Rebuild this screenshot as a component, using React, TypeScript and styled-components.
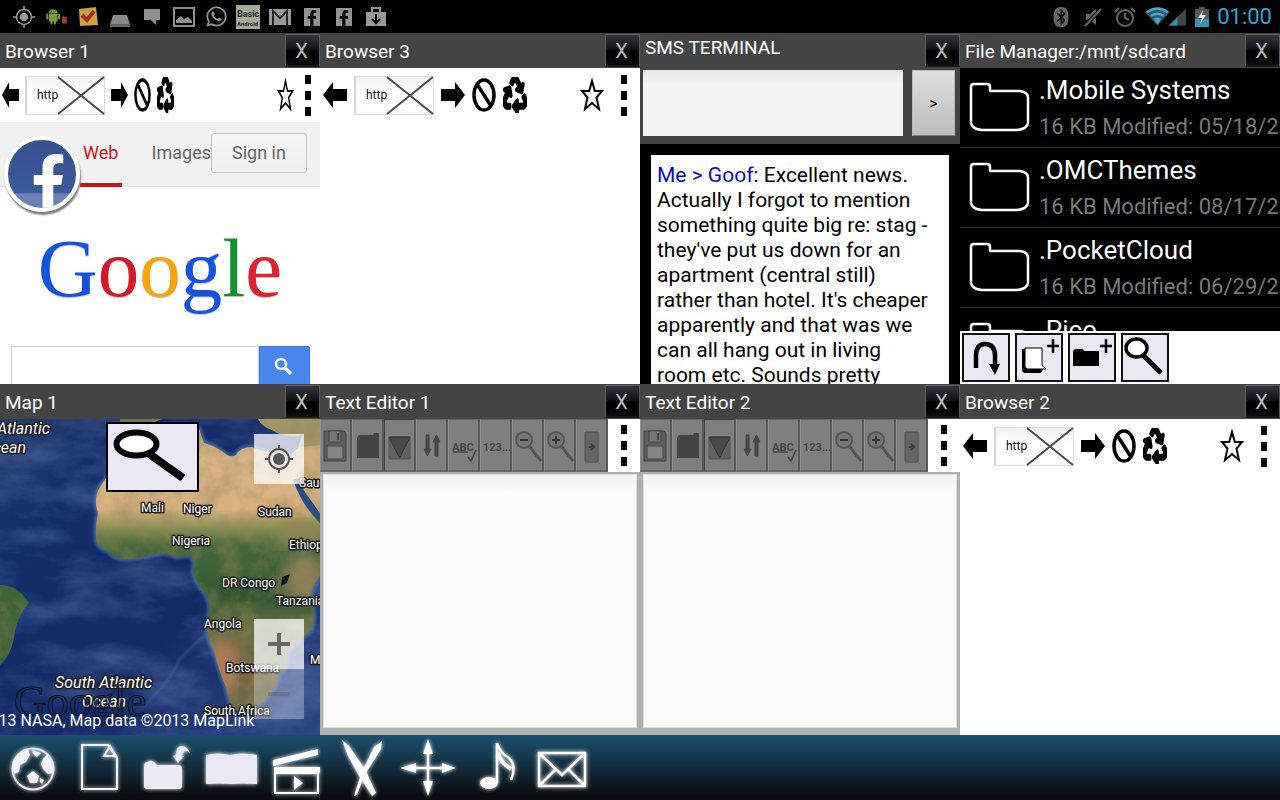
import React from "react";
import styled, { createGlobalStyle, css } from "styled-components";
import { FaRecycle, FaWhatsapp, FaFacebookF, FaBluetooth } from "react-icons/fa";
import { AiFillAndroid } from "react-icons/ai";

const GlobalStyle = createGlobalStyle`
  *, *::before, *::after { box-sizing: border-box; }
  body { margin: 0; background: #000; font-family: Roboto, "Liberation Sans", sans-serif; }
  button, input, textarea { font-family: inherit; margin: 0; }
  h2, p, ul { margin: 0; padding: 0; }
`;

const Desktop = styled.div`
  display: grid;
  grid-template-rows: 33px minmax(0, 1fr) 65px;
  height: 100vh;
  overflow: hidden;
`;

const StatusBar = styled.header`
  display: flex;
  align-items: center;
  padding: 0 8px 0 12px;
  background: #000;
  color: #8c8c8c;
`;

const Notices = styled.div`
  display: flex;
  gap: 8px;
  flex: 1;
`;

const StatusIcon = styled.span<{ $w?: number }>`
  display: flex;
  align-items: center;
  justify-content: center;
  width: ${(p) => p.$w ?? 24}px;
  height: 24px;
`;

const FbNotice = styled(StatusIcon)`
  width: 16px;
  height: 18px;
  margin: 3px 4px;
  background: #929292;
  color: #000;
  align-items: flex-end;
  justify-content: flex-end;
`;

const Indicators = styled.div`
  display: flex;
  align-items: center;
  gap: 8px;
`;

const Clock = styled.time`
  font-size: 22px;
  line-height: 34px;
  color: #33a5d5;
`;

const Windows = styled.main`
  display: grid;
  grid-template-columns: repeat(4, minmax(0, 1fr));
  grid-template-rows: repeat(2, minmax(0, 1fr));
`;

const Window = styled.section`
  display: flex;
  flex-direction: column;
  overflow: hidden;
  background: #fff;
`;

const TitleBar = styled.div`
  display: flex;
  flex: none;
  height: 35px;
  padding-left: 5px;
  background: #444;
  color: #fff;
`;

const Title = styled.h2<{ $raised?: boolean }>`
  flex: 1;
  font-size: 19px;
  font-weight: 400;
  line-height: ${(p) => (p.$raised ? 30 : 38)}px;
  white-space: nowrap;
  overflow: hidden;
`;

const CloseButton = styled.button`
  width: 35px;
  height: 33px;
  margin-top: 1px;
  padding: 0 2px 0 0;
  border: 1px solid #5d5f66;
  border-width: 1px 1px 2px;
  border-bottom-color: #18181a;
  background: linear-gradient(#33353c, #121318 45%, #000 55%, #0b0b0d);
  color: #bdbdbd;
  font-size: 20px;
  line-height: 32px;
`;

const BrowserBar = styled.div<{ $compact?: boolean }>`
  display: flex;
  flex: none;
  align-items: center;
  height: 54px;
  gap: ${(p) => (p.$compact ? 6 : 7)}px;
  padding: ${(p) => (p.$compact ? "0 9px 0 2px" : "0 13px 0 3px")};
`;

const IconButton = styled.button<{ $w: number; $end?: boolean }>`
  display: flex;
  flex: none;
  width: ${(p) => p.$w}px;
  height: 36px;
  padding: 0;
  border: 0;
  background: none;
  color: #000;
  ${(p) => p.$end && css`margin: 0 ${p.$w > 20 ? 10 : 5}px 0 auto;`}
  svg { width: 100%; height: 100%; display: block; }
`;

const UrlField = styled.div`
  position: relative;
  flex: none;
  width: 80px;
  height: 39px;
`;

const UrlInput = styled.input`
  width: 100%;
  height: 100%;
  padding: 0 0 0 10px;
  border: 1px solid #dcdcdc;
  border-left: 2px solid #d4d4d4;
  background: linear-gradient(#f1f1f1, #fff 40%);
  font-size: 12px;
  color: #111;
`;

const ClearButton = styled.button`
  position: absolute;
  top: 0;
  right: 0;
  width: 48px;
  height: 39px;
  padding: 0;
  border: 0;
  background: none;
  svg { display: block; width: 100%; height: 100%; }
`;

const MoreButton = styled.button`
  display: flex;
  flex: none;
  flex-direction: column;
  justify-content: space-between;
  width: 6px;
  height: 41px;
  padding: 0;
  border: 0;
  background: none;
`;

const Square = styled.span`
  height: 9px;
  width: 6px;
  background: #000;
`;

const SearchPage = styled.div`
  position: relative;
  flex: 1;
  overflow: hidden;
`;

const PageNav = styled.nav`
  display: flex;
  height: 65px;
  padding: 0 13px 0 80px;
  background: #f1f1f1;
  border-bottom: 1px solid #e0e0e0;
`;

const NavLink = styled.a<{ $active?: boolean }>`
  height: 65px;
  width: ${(p) => (p.$active ? 42 : 60)}px;
  margin-right: ${(p) => (p.$active ? 30 : 0)}px;
  padding-left: ${(p) => (p.$active ? 3 : 0)}px;
  border-bottom: ${(p) => (p.$active ? "4px solid #c5161d" : "0")};
  color: ${(p) => (p.$active ? "#c5161d" : "#666")};
  font-size: 18px;
  line-height: 62px;
  text-decoration: none;
  overflow: hidden;
`;

const SignIn = styled.button`
  width: 96px;
  height: 40px;
  margin: 11px 0 0 auto;
  padding: 0;
  flex: none;
  border: 1px solid #c2c2c2;
  border-radius: 3px;
  background: linear-gradient(#f6f6f6, #f0f0f0);
  color: #666;
  font-size: 18px;
  line-height: 36px;
`;

const ChatHead = styled.button`
  position: absolute;
  left: 4px;
  top: 14px;
  display: flex;
  align-items: flex-end;
  justify-content: flex-end;
  width: 76px;
  height: 76px;
  padding: 0;
  border: 4px solid #fff;
  border-radius: 50%;
  overflow: hidden;
  background: linear-gradient(#34528f, #3b5a98 78%, #6a82b5 79%);
  box-shadow: 1px 3px 2px #777;
  color: #fff;
  svg { flex: none; margin-bottom: -1px; }
`;

const LogoText = styled.p`
  display: flex;
  justify-content: center;
  height: 116px;
  margin-top: 43px;
  font-family: "Liberation Serif", serif;
  font-size: 83px;
  line-height: 76px;
`;

const Letter = styled.span<{ $c: string }>`
  color: ${(p) => p.$c};
  text-shadow: 0 1px 1px #0004;
`;

const SearchForm = styled.form`
  display: flex;
  height: 52px;
  padding: 0 10px 0 11px;
`;

const SearchInput = styled.input`
  flex: 1;
  min-width: 0;
  border: 1px solid #ccc;
  background: #fff;
  padding: 0 8px;
`;

const SearchButton = styled.button`
  width: 51px;
  padding: 0 3px 9px 0;
  border: 1px solid #3b7ae8;
  border-radius: 0 2px 2px 0;
  background: #4787ed;
  color: #fff;
`;

const SmsForm = styled.form`
  display: flex;
  flex: none;
  gap: 9px;
  height: 76px;
  padding: 2px 5px 8px 3px;
  background: #444;
`;

const SmsInput = styled.textarea`
  flex: 1;
  min-width: 0;
  border: 0;
  padding: 4px;
  background: linear-gradient(#e8e8e8, #f3f3f3 20%);
  resize: none;
`;

const SendButton = styled.button`
  width: 43px;
  padding: 0;
  border: 1px solid #bbb;
  border-bottom-color: #777;
  background: linear-gradient(#dedede, #bdbdbd);
  color: #000;
  font-size: 16px;
`;

const SmsLog = styled.div`
  flex: 1;
  min-height: 0;
  overflow: hidden;
  padding: 11px 11px 0;
  background: #000;
`;

const Message = styled.p`
  padding: 8px 0 10px 6px;
  background: #fff;
  color: #000;
  font-size: 21px;
  line-height: 25px;
  white-space: pre-line;
`;

const Sender = styled.span`
  color: #0a0aae;
`;

const FileList = styled.ul`
  flex: 1;
  min-height: 0;
  overflow: hidden;
  list-style: none;
  background: #000;
`;

const FileRow = styled.li`
  display: flex;
  height: 80px;
  padding: 4px 0 0 9px;
  gap: 9px;
  border-bottom: 1px solid #2a2a2a;
  svg { flex: none; margin-top: 10px; }
`;

const FileName = styled.p`
  color: #fff;
  font-size: 26px;
  line-height: 36px;
`;

const FileMeta = styled.p`
  color: #7a7a7a;
  font-size: 22px;
  line-height: 38px;
  white-space: nowrap;
`;

const FileTools = styled.div`
  display: flex;
  flex: none;
  gap: 5px;
  height: 53px;
  padding: 2px;
`;

const FileTool = styled.button`
  width: 48px;
  height: 49px;
  padding: 0;
  border: 2px solid #111;
  background: #e9e8f3;
  svg { display: block; }
`;

const MapView = styled.div`
  position: relative;
  flex: 1;
  min-height: 0;
  overflow: hidden;
  background: #15306a;
`;

const MapDrawing = styled.svg`
  display: block;
  width: 100%;
  height: 100%;
  font-family: Roboto, sans-serif;
`;

const MapSearch = styled.button`
  position: absolute;
  top: 3px;
  left: 106px;
  width: 93px;
  height: 70px;
  padding: 0;
  border: 2px solid #000;
  background: #e9e8f4;
  svg { display: block; }
`;

const MapControl = styled.button<{ $dim?: boolean }>`
  display: flex;
  align-items: center;
  justify-content: center;
  width: 50px;
  height: 50px;
  padding: 0;
  border: 0;
  background: ${(p) => (p.$dim ? "#ffffff4d" : "#ffffffbf")};
`;

const MapControls = styled.div`
  position: absolute;
  top: 15px;
  right: 16px;
  bottom: 16px;
  display: flex;
  flex-direction: column;
`;

const Spacer = styled.span`
  flex: 1;
`;

const EditorBar = styled.div`
  display: flex;
  flex: none;
  height: 53px;
`;

const EditorTools = styled.div`
  display: grid;
  grid-template-columns: repeat(9, 1fr);
  flex: 1;
  background: #666;
`;

const EditorTool = styled.button<{ $boxed?: boolean }>`
  display: flex;
  align-items: center;
  justify-content: center;
  padding: 0;
  border: 1px solid ${(p) => (p.$boxed ? "#404040" : "#686868")};
  border-left-color: ${(p) => (p.$boxed ? "#404040" : "#919191")};
  border-right: 2px solid #595959;
  border-bottom: 2px solid #666;
  background: #7f7f7f;
`;

const MoreCell = styled.div`
  display: flex;
  align-items: center;
  justify-content: center;
  width: 32px;
`;

const EditorBody = styled.div`
  display: flex;
  flex: 1;
  padding: 2px 3px 7px;
  background: #b0b0b0;
`;

const EditorText = styled.textarea`
  flex: 1;
  min-width: 0;
  padding: 8px;
  border: 1px solid #ddd;
  background: linear-gradient(#f3f3f3, #fafafa 16px);
  resize: none;
`;

const Dock = styled.footer`
  display: flex;
  background: linear-gradient(#1c4f6c, #14374b 35%, #0c0d12 90%);
`;

const DockButton = styled.button`
  width: 66px;
  height: 65px;
  padding: 0;
  border: 0;
  background: none;
  svg { display: block; filter: drop-shadow(0 0 2px #fff); }
`;

function BackIcon() {
  return <svg viewBox="0 0 24 36" preserveAspectRatio="none"><path d="M0 18 L10 5 V12 H24 V24 H10 V31 Z" /></svg>;
}
function ForwardIcon() {
  return <svg viewBox="0 0 24 36" preserveAspectRatio="none"><path d="M24 18 L14 5 V12 H0 V24 H14 V31 Z" /></svg>;
}
function StopIcon() {
  return (
    <svg viewBox="0 0 24 36" preserveAspectRatio="none" fill="none" stroke="#000" strokeWidth="3.500">
      <ellipse cx="12" cy="18" rx="10" ry="15" /><path d="M5 7 L19 29" />
    </svg>
  );
}
function StarIcon() {
  return (
    <svg viewBox="0 0 24 36" preserveAspectRatio="none" fill="none" stroke="#000" strokeWidth="2">
      <path d="M12 4 L14.800 14 H22 L16.500 20.500 L19 32 L12 26 L5 32 L7.500 20.500 L2 14 H9.200 Z" />
    </svg>
  );
}

function More() {
  return <MoreButton aria-label="More"><Square /><Square /><Square /></MoreButton>;
}

function Titled({ title, raised }: { title: string; raised?: boolean }) {
  return (
    <TitleBar>
      <Title $raised={raised}>{title}</Title>
      <CloseButton aria-label={"Close " + title}>X</CloseButton>
    </TitleBar>
  );
}

function Toolbar({ compact }: { compact?: boolean }) {
  const w = compact ? 17 : 24;
  return (
    <BrowserBar $compact={compact}>
      <IconButton $w={w} aria-label="Back"><BackIcon /></IconButton>
      <UrlField>
        <UrlInput aria-label="Address" defaultValue="http" />
        <ClearButton aria-label="Clear address">
          <svg viewBox="0 0 48 39" stroke="#4a4a4a" strokeWidth="2"><path d="M1 1 L47 38 M47 1 L1 38" /></svg>
        </ClearButton>
      </UrlField>
      <IconButton $w={w} aria-label="Forward"><ForwardIcon /></IconButton>
      <IconButton $w={w} aria-label="Stop"><StopIcon /></IconButton>
      <IconButton $w={w} aria-label="Reload">
        <FaRecycle preserveAspectRatio="none" stroke="#000" strokeWidth={38} />
      </IconButton>
      <IconButton $w={w} $end aria-label="Bookmark"><StarIcon /></IconButton>
      <More />
    </BrowserBar>
  );
}

const logo: [string, string][] = [
  ["G", "#1453e0"], ["o", "#d5192b"], ["o", "#f5a50a"], ["g", "#1453e0"], ["l", "#12922b"], ["e", "#e0202f"],
];

function BrowserOne() {
  return (
    <Window>
      <Titled title="Browser 1" />
      <Toolbar compact />
      <SearchPage>
        <PageNav>
          <NavLink href="#web" $active>Web</NavLink>
          <NavLink href="#images">Images</NavLink>
          <SignIn>Sign in</SignIn>
        </PageNav>
        <LogoText>{logo.map(([l, c], i) => <Letter key={i} $c={c}>{l}</Letter>)}</LogoText>
        <SearchForm>
          <SearchInput aria-label="Search" />
          <SearchButton type="button" aria-label="Search">
            <svg width="18" height="18" viewBox="0 0 18 18" fill="none" stroke="#fff">
              <circle cx="7" cy="7" r="5" strokeWidth="2.500" /><path d="M11 11 L17 17" strokeWidth="3.500" />
            </svg>
          </SearchButton>
        </SearchForm>
        <ChatHead aria-label="Facebook chat"><FaFacebookF size={55} /></ChatHead>
      </SearchPage>
    </Window>
  );
}

function Browser({ title }: { title: string }) {
  return <Window><Titled title={title} /><Toolbar /></Window>;
}

const smsText = `: Excellent news.
Actually I forgot to mention
something quite big re: stag -
they've put us down for an
apartment (central still)
rather than hotel. It's cheaper
apparently and that was we
can all hang out in living
room etc. Sounds pretty`;

function SmsTerminal() {
  return (
    <Window>
      <Titled title="SMS TERMINAL" raised />
      <SmsForm>
        <SmsInput aria-label="Message" />
        <SendButton type="button">&gt;</SendButton>
      </SmsForm>
      <SmsLog>
        <Message><Sender>Me &gt; Goof</Sender>{smsText}</Message>
      </SmsLog>
    </Window>
  );
}

const files = [
  [".Mobile Systems", "16 KB Modified: 05/18/2"],
  [".OMCThemes", "16 KB Modified: 08/17/2"],
  [".PocketCloud", "16 KB Modified: 06/29/2"],
  [".Pico", "16 KB"],
];

function FileManager() {
  return (
    <Window>
      <Titled title="File Manager:/mnt/sdcard" />
      <FileList>
        {files.map(([name, meta]) => (
          <FileRow key={name}>
            <svg width="61" height="50" viewBox="0 0 61 50" fill="none" stroke="#fff" strokeWidth="2.500" strokeLinejoin="round">
              <path d="M2 5 Q2 2 5 2 H18 Q21 2 21 5 V9 H51 Q59 10 59 16 V41 Q58 47 48 48 H13 Q3 47 2 41 Z" />
            </svg>
            <div>
              <FileName>{name}</FileName>
              <FileMeta>{meta}</FileMeta>
            </div>
          </FileRow>
        ))}
      </FileList>
      <FileTools>
        <FileTool aria-label="Up">
          <svg width="44" height="45" viewBox="0 0 44 45"><path d="M12 33 V21 Q12 9 21 9 Q31 9 31 21 V31" fill="none" stroke="#000" strokeWidth="4.500" /><path d="M25 29 H36 L31 40 Z" /></svg>
        </FileTool>
        <FileTool aria-label="New file">
          <svg width="44" height="45" viewBox="0 0 44 45">
            <path d="M5 14 H10 V32 H27 L24 38 H7 L5 36 Z" /><path d="M8 13 H25 V30 L29 34 H10 Q7 32 8 28 Z" fill="#fff" stroke="#000" />
            <path d="M36 4 V18 M30 11 H42" stroke="#000" strokeWidth="2.500" />
          </svg>
        </FileTool>
        <FileTool aria-label="New folder">
          <svg width="44" height="45" viewBox="0 0 44 45">
            <path d="M3 16 L5 14 H13 L14 16 H29 V31 H3 Z" /><path d="M36 4 V18 M30 11 H42" stroke="#000" strokeWidth="2.500" />
          </svg>
        </FileTool>
        <FileTool aria-label="Find">
          <svg width="44" height="45" viewBox="0 0 44 45">
            <path d="M20 20 L38 38" stroke="#000" strokeWidth="5" /><ellipse cx="13.500" cy="13" rx="10.500" ry="9" fill="#fff" stroke="#000" strokeWidth="3.500" />
          </svg>
        </FileTool>
      </FileTools>
    </Window>
  );
}

const AFRICA =
  "M112 50 L100 68 Q93 80 98 94 Q95 108 96 118 Q96 128 108 132 Q116 142 130 140 L152 136 Q166 132 176 138 L190 136 Q196 142 193 152 Q196 164 206 176 Q213 190 207 204 Q206 218 214 232 Q219 252 226 268 Q229 286 236 290 Q252 290 264 282 Q275 272 279 256 Q290 246 287 234 Q300 222 312 210 Q316 196 311 182 Q310 168 324 152 V100 L312 90 L300 68 L297 56 L298 38 Q288 34 276 32 Q262 34 252 28 Q240 28 236 36 Q230 40 222 32 Q212 26 204 24 L199 10 Q160 8 134 14 Z";
const ARABIA = "M292 34 L300 28 L324 26 V100 L300 66 Z";
const TURKEY = "M258 0 H324 V32 L296 36 L302 16 Q286 20 272 11 Q262 8 258 0 Z";
const BRAZIL = "M0 166 Q18 166 29 184 Q18 196 15 212 Q12 236 0 246 Z";

const places: [string, number, number][] = [
  ["Mali", 141, 93], ["Niger", 183, 94], ["Sudan", 258, 97], ["Saudi", 299, 68],
  ["Nigeria", 172, 126], ["Ethiopia", 289, 130], ["DR Congo", 222, 168], ["Tanzania", 276, 186],
  ["Angola", 204, 209], ["Botswana", 226, 253], ["South Africa", 204, 296], ["Moz", 310, 245],
];

function MapWindow() {
  return (
    <Window>
      <Titled title="Map 1" />
      <MapView>
        <MapDrawing viewBox="0 0 320 316" preserveAspectRatio="xMidYMid slice">
          <defs>
            <linearGradient id="land" gradientUnits="userSpaceOnUse" x1="0" y1="0" x2="0" y2="300">
              <stop offset="0" stopColor="#a59568" /><stop offset=".14" stopColor="#dcb688" /><stop offset=".3" stopColor="#d8b180" />
              <stop offset=".36" stopColor="#8f8f57" /><stop offset=".42" stopColor="#466a3c" /><stop offset=".6" stopColor="#2d5630" />
              <stop offset=".68" stopColor="#62703f" /><stop offset=".8" stopColor="#846a48" /><stop offset="1" stopColor="#5f6640" />
            </linearGradient>
            <linearGradient id="sea" x1="0" y1="0" x2="1" y2="1">
              <stop offset="0" stopColor="#23406f" /><stop offset=".22" stopColor="#142e6a" /><stop offset=".6" stopColor="#142b66" /><stop offset="1" stopColor="#2b4787" />
            </linearGradient>
            <filter id="soft"><feGaussianBlur stdDeviation="7" /></filter>
            <filter id="thin"><feGaussianBlur stdDeviation="1" /></filter>
            <filter id="relief" x="0" y="0" width="1" height="1">
              <feTurbulence type="fractalNoise" baseFrequency=".05" numOctaves="5" seed="4" />
              <feColorMatrix values="0 0 0 0 .3  0 0 0 0 .24  0 0 0 0 .1  1.800 0 0 0 -.7" />
            </filter>
            <filter id="waves" x="0" y="0" width="1" height="1">
              <feTurbulence type="fractalNoise" baseFrequency=".015 .035" numOctaves="5" seed="9" />
              <feColorMatrix values="0 0 0 0 .25  0 0 0 0 .38  0 0 0 0 .7  1.500 0 0 0 -.6" />
            </filter>
            <clipPath id="landClip"><path d={AFRICA} /><path d={BRAZIL} /><path d={ARABIA} /><path d={TURKEY} /></clipPath>
          </defs>
          <rect width="320" height="316" fill="url(#sea)" />
          <rect width="320" height="316" filter="url(#waves)" opacity=".45" />
          <path d="M145 286 Q170 262 180 240 Q192 226 206 216" fill="none" stroke="#4d6ca5" strokeWidth="2" opacity=".5" filter="url(#thin)" />
          <path d={AFRICA} fill="none" stroke="#5f8bbd" strokeWidth="5" opacity=".5" filter="url(#thin)" />
          <path d="M120 0 H162 L150 5 H120 Z" fill="#6c7850" />
          <path d={TURKEY} fill="#a3946a" />
          <path d={BRAZIL} fill="#3d6339" />
          <path d={AFRICA} fill="url(#land)" />
          <path d={ARABIA} fill="#d2ad7e" />
          <g clipPath="url(#landClip)">
            <ellipse cx="303" cy="160" rx="22" ry="24" fill="#a08660" filter="url(#soft)" opacity=".8" />
            <ellipse cx="300" cy="115" rx="25" ry="14" fill="#8a8654" filter="url(#soft)" />
            <ellipse cx="222" cy="250" rx="14" ry="28" fill="#b57c56" filter="url(#soft)" />
            <ellipse cx="272" cy="225" rx="22" ry="26" fill="#4c6538" filter="url(#soft)" />
            <rect width="320" height="316" filter="url(#relief)" opacity=".6" />
          </g>
          <path d="M296 60 Q304 84 322 102" fill="none" stroke="#2c4d86" strokeWidth="6" />
          <path d="M282 158 L290 155 L287 164 L281 167 Z" fill="#10181a" />
          <g fill="#fff" stroke="#1c1c1c" strokeWidth="3" paintOrder="stroke" strokeLinejoin="round">
            {places.map(([name, x, y]) => <text key={name} x={x} y={y} fontSize="12">{name}</text>)}
            <g fontStyle="italic" fontSize="16">
              <text x="-3" y="15">Atlantic</text><text x="-18" y="34">Ocean</text>
              <text x="55" y="269">South Atlantic</text><text x="82" y="288">Ocean</text>
            </g>
          </g>
          <text x="14" y="297" fontFamily="Liberation Serif, serif" fontSize="45" fill="#20305066" stroke="#0b1226" strokeWidth="1">Google</text>
          <text x="-32" y="307" fontSize="16" fill="#fff">©2013 NASA, Map data ©2013 MapLink</text>
        </MapDrawing>
        <MapSearch aria-label="Search map">
          <svg width="89" height="66" viewBox="0 0 89 66">
            <path d="M40 29 L75 54" stroke="#000" strokeWidth="8" /><ellipse cx="28.500" cy="20" rx="20" ry="11.500" fill="#fff" stroke="#000" strokeWidth="6" />
          </svg>
        </MapSearch>
        <MapControls>
          <MapControl aria-label="My location">
            <svg width="28" height="28" viewBox="0 0 28 28" fill="none" stroke="#555" strokeWidth="2">
              <circle cx="14" cy="14" r="10" /><circle cx="14" cy="14" r="6" fill="#555" stroke="none" /><path d="M14 0 V5 M14 23 V28 M0 14 H5 M23 14 H28" />
            </svg>
          </MapControl>
          <Spacer />
          <MapControl aria-label="Zoom in"><svg width="24" height="24" viewBox="0 0 24 24" stroke="#666" strokeWidth="4"><path d="M12 1 V23 M1 12 H23" /></svg></MapControl>
          <MapControl $dim aria-label="Zoom out"><svg width="24" height="24" viewBox="0 0 24 24" stroke="#6668" strokeWidth="4"><path d="M1 12 H23" /></svg></MapControl>
        </MapControls>
      </MapView>
    </Window>
  );
}

const glyph = { fontFamily: "Liberation Sans Narrow, Roboto, sans-serif", fontWeight: 700, fill: "#454545" };

const editorIcons: [string, React.ReactNode][] = [
  ["Save", <g><path d="M3 11 H23 L25 13 V41 H3 Z" fill="#5e5e5e" stroke="#444" /><path d="M8 11 H20 V22 H8 Z" fill="#777" stroke="#444" /><path d="M16 13 H18 V20 H16 Z" fill="#444" /><path d="M6 26 H22 V39 H6 Z" fill="#858585" stroke="#444" /></g>],
  ["Open", <path d="M4 18 L6 15 H20 L21 13 H26 V38 H4 Z" fill="#444" />],
  ["Save as", <g><path d="M4 17 H25 V39 H4 Z" fill="#626262" stroke="#555" /><path d="M4 17 H25 L14.500 38 Z" fill="#484848" stroke="#333" /></g>],
  ["Sort", <path d="M9 15 H12 V29 H14 L10.500 36 L7 29 H9 Z M18 36 H21 V22 H23 L19.500 15 L16 22 H18 Z" fill="#4a4a4a" stroke="#444" />],
  ["Spelling", <g><text {...glyph} x="3" y="31" fontSize="11">ABC</text><path d="M4 32 H19 M19 37 L22 41 L27 30" stroke="#444" strokeWidth="1.500" fill="none" /></g>],
  ["Word count", <text {...glyph} x="2" y="31" fontSize="11">123...</text>],
  ["Zoom out", <g><path d="M16 26 L28 41" stroke="#555" strokeWidth="3" /><circle cx="11" cy="20" r="8" fill="#757575" stroke="#555" strokeWidth="2" /><path d="M7 20 H15" stroke="#333" strokeWidth="2" /></g>],
  ["Zoom in", <g><path d="M16 26 L28 41" stroke="#555" strokeWidth="3" /><circle cx="11" cy="20" r="8" fill="#757575" stroke="#555" strokeWidth="2" /><path d="M7 20 H15 M11 16 V24" stroke="#333" strokeWidth="2" /></g>],
  ["Exit", <g><path d="M8 12 H21 V42 H8 Z" fill="#646464" stroke="#505050" /><path d="M12 27 H16 M14 24 L17 27 L14 30" stroke="#3c3c3c" strokeWidth="2" fill="none" /></g>],
];

function Editor({ title }: { title: string }) {
  return (
    <Window>
      <Titled title={title} />
      <EditorBar>
        <EditorTools>
          {editorIcons.map(([name, art]) => (
            <EditorTool key={name} aria-label={name} $boxed={name === "Save as"}>
              <svg width="29" height="50" viewBox="0 0 29 50">{art}</svg>
            </EditorTool>
          ))}
        </EditorTools>
        <MoreCell><More /></MoreCell>
      </EditorBar>
      <EditorBody><EditorText aria-label={title} /></EditorBody>
    </Window>
  );
}

const dockIcons: [string, React.ReactNode][] = [
  ["Browser", <g><circle cx="33" cy="34" r="20.500" fill="none" stroke="#e9e8f4" strokeWidth="2" /><path d="M14 26 Q19 16 28 15 L30 20 L26 27 L20 30 L19 37 L14 39 L12 32 Z M32 15 L41 18 L37 22 L33 19 Z M43 24 L47 20 L53 29 L53 38 L48 39 L43 34 L41 29 Z M27 41 L33 36 L39 41 L37 48 L30 48 Z M40 43 L44 45 L42 49 L40 47 Z" fill="#f3f2fb" /></g>],
  ["Document", <path d="M16 10 H42 L51 23 V54 H16 Z M44 11 L38 21 H50 Z" fill="none" stroke="#f4f4fb" strokeWidth="2" />],
  ["Open folder", <g fill="#eceaf6"><path d="M12 31 Q12 27 16 27 Q18 24 22 27 L25 30 H46 Q50 30 50 34 V51 Q50 54 47 54 H15 Q12 54 12 51 Z" /><path d="M41 21 L44 20 Q44 11 50 11 Q56 12 58 18 Q52 13 50 21 L52 21 L46 28 Z" /></g>],
  ["Book", <path d="M8 20 Q20 17 32 20 Q44 17 59 20 V49 Q44 48 34 49 Q22 48 8 49 Z" fill="#eae8f4" />],
  ["Video", <g fill="#fff"><path d="M9 25 L54 14 V20 L9 31 Z" /><path d="M10 32 H56 V38 H10 Z" /><path d="M11 38 H54 V58 H11 Z" fill="none" stroke="#fff" strokeWidth="2" /><path d="M30 41 L39 48 L30 55 Z" /></g>],
  ["Tools", <g fill="#fff"><path d="M12 5 L19 11 L35 34 L46 58 L42 61 L28 39 L18 21 Z" /><path d="M52 6 L51 14 L34 41 L27 60 L24 61 L31 39 L44 12 Z" /></g>],
  ["Move", <g fill="#fff"><path d="M32 12 V54 M10 33 H54" stroke="#fff" strokeWidth="2.500" /><path d="M32 4 L37 19 H27 Z M32 61 L37 46 H27 Z M4 33 L20 28 V38 Z M60 33 L46 28 V38 Z" /></g>],
  ["Music", <g><ellipse cx="27" cy="48" rx="9" ry="6" fill="#fff" /><path d="M35 48 V8 Q38 18 47 23 Q55 31 49 45" fill="none" stroke="#fff" strokeWidth="2.500" /><path d="M36 18 Q38 27 49 34" fill="none" stroke="#fff" strokeWidth="4" /></g>],
  ["Mail", <g fill="none" stroke="#fff" strokeWidth="2.500"><path d="M11 18 H57 V51 H11 Z M11 18 L34 40 L57 18 M11 51 L28 34 M57 51 L40 34" /></g>],
];

function Status() {
  return (
    <StatusBar>
      <Notices>
        <StatusIcon><svg width="22" height="22" viewBox="0 0 22 22" fill="none" stroke="#999" strokeWidth="1.500"><circle cx="11" cy="11" r="7.500" /><circle cx="11" cy="11" r="3.500" fill="#999" /><path d="M11 0 V4 M11 18 V22 M0 11 H4 M18 11 H22" /></svg></StatusIcon>
        <StatusIcon><AiFillAndroid size={23} color="#7d9c34" /><svg width="7" height="20" viewBox="0 0 7 20"><path d="M0 9 L6 10 V18 H0 Z" fill="#a53a35" /></svg></StatusIcon>
        <StatusIcon><svg width="22" height="22" viewBox="0 0 22 22"><path d="M2 3 L19 1 L21 19 L3 20 Z" fill="#c6a344" /><path d="M5 9 L10 14 L17 5" fill="none" stroke="#a62d1c" strokeWidth="4" /></svg></StatusIcon>
        <StatusIcon><svg width="22" height="22" viewBox="0 0 22 22"><path d="M4 9 H18 L21 19 H1 Z" fill="#8a8a8a" /><path d="M1 18 H21 V21 H1 Z" fill="#666" /></svg></StatusIcon>
        <StatusIcon><svg width="18" height="18" viewBox="0 0 18 18"><path d="M1 1 H17 V12 H13 V17 L8 12 H1 Z" fill="#8e8e8e" /></svg></StatusIcon>
        <StatusIcon><svg width="22" height="20" viewBox="0 0 22 20"><path d="M1 1 H21 V19 H1 Z" fill="none" stroke="#8e8e8e" strokeWidth="2" /><path d="M3 16 V13 L8 9 L11 12 L15 10 L19 14 V16 Z" fill="#8e8e8e" /></svg></StatusIcon>
        <StatusIcon><FaWhatsapp size={23} color="#999" /></StatusIcon>
        <StatusIcon><svg width="24" height="24" viewBox="0 0 24 24"><path d="M0 0 H24 V24 H0 Z" fill="#a5ab98" /><text x="1" y="12" fontSize="9" fontWeight="700" fill="#222">Basic</text><text x="1" y="21" fontSize="6" fontWeight="700" fill="#222">Android</text></svg></StatusIcon>
        <StatusIcon><svg width="22" height="18" viewBox="0 0 22 18"><path d="M0 1 H22 V17 H0 Z" fill="#999" /><path d="M4 17 V3 L11 10 L18 3 V17" fill="none" stroke="#222" strokeWidth="2" /></svg></StatusIcon>
        <FbNotice><FaFacebookF size={16} /></FbNotice>
        <FbNotice><FaFacebookF size={16} /></FbNotice>
        <StatusIcon><svg width="22" height="22" viewBox="0 0 22 22"><path d="M1 6 H21 V20 H1 Z" fill="#999" /><path d="M7 6 V2 H15 V6" fill="none" stroke="#999" strokeWidth="2" /><path d="M11 8 V16 M7 13 L11 17 L15 13" stroke="#000" strokeWidth="2" fill="none" /></svg></StatusIcon>
      </Notices>
      <Indicators>
        <StatusIcon><FaBluetooth size={20} color="#666" /></StatusIcon>
        <StatusIcon><svg width="20" height="20" viewBox="0 0 20 20"><path d="M3 7 H7 L13 2 V18 L7 13 H3 Z" fill="#666" /><path d="M2 18 L18 3" stroke="#000" strokeWidth="4" /><path d="M2 19 L18 2" stroke="#666" strokeWidth="2" /></svg></StatusIcon>
        <StatusIcon><svg width="22" height="20" viewBox="0 0 22 20" fill="none" stroke="#666" strokeWidth="2"><circle cx="11" cy="11" r="8" /><path d="M11 6 V11 L15 13 M1 5 L5 1 M17 1 L21 5" /></svg></StatusIcon>
        <StatusIcon $w={42}>
          <svg width="44" height="22" viewBox="0 0 44 22">
            <path d="M0 6 Q13 -4 26 6 L13 20 Z" fill="#29586b" /><path d="M2 6 Q13 -2 24 6 M6 10 Q13 5 20 10" fill="none" stroke="#47a5ca" strokeWidth="2.500" /><path d="M9 13 Q13 10 17 13 L13 19 Z" fill="#47a5ca" />
            <path d="M25 20 L43 2 V20 Z" fill="#444" /><path d="M25 20 L34 11 V20 Z" fill="#2d8db4" />
          </svg>
        </StatusIcon>
        <StatusIcon $w={14}><svg width="14" height="22" viewBox="0 0 14 22"><path d="M0 3 H4 V1 H10 V3 H14 V13 H0 Z" fill="#555" /><path d="M0 13 H14 V21 H0 Z" fill="#3593b8" /><path d="M8 4 L3 12 H7 L5 18 L11 9 H7 Z" fill="#eee" /></svg></StatusIcon>
        <Clock>01:00</Clock>
      </Indicators>
    </StatusBar>
  );
}

export default function App() {
  return (
    <>
      <GlobalStyle />
      <Desktop>
        <Status />
        <Windows>
          <BrowserOne />
          <Browser title="Browser 3" />
          <SmsTerminal />
          <FileManager />
          <MapWindow />
          <Editor title="Text Editor 1" />
          <Editor title="Text Editor 2" />
          <Browser title="Browser 2" />
        </Windows>
        <Dock>
          {dockIcons.map(([name, art]) => (
            <DockButton key={name} aria-label={name}><svg width="66" height="65" viewBox="0 0 66 65">{art}</svg></DockButton>
          ))}
        </Dock>
      </Desktop>
    </>
  );
}
